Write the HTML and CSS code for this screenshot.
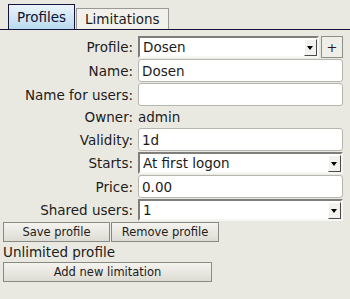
FILE: index.html
```html
<!DOCTYPE html>
<html lang="en">
<head>
    <meta charset="UTF-8">
    <title>Profiles</title>
    <link rel="stylesheet" href="styles.css">
</head>
<body>
    <div class="tabbar">
        <div class="tab active">Profiles</div>
        <div class="tab">Limitations</div>
    </div>

    <div class="form">
        <label>Profile:</label>
        <div class="with-add">
            <div class="select"><span>Dosen</span><span class="arrow"></span></div>
            <button class="add">+</button>
        </div>

        <label>Name:</label>
        <input class="field" type="text" value="Dosen">

        <label>Name for users:</label>
        <input class="field" type="text" value="">

        <label class="plain">Owner:</label>
        <span class="value">admin</span>

        <label>Validity:</label>
        <input class="field" type="text" value="1d">

        <label>Starts:</label>
        <div class="select"><span>At first logon</span><span class="arrow"></span></div>

        <label>Price:</label>
        <input class="field" type="text" value="0.00">

        <label>Shared users:</label>
        <div class="select"><span>1</span><span class="arrow"></span></div>
    </div>

    <div class="actions">
        <button class="btn save">Save profile</button>
        <button class="btn remove">Remove profile</button>
    </div>

    <p class="note">Unlimited profile</p>
    <button class="btn wide">Add new limitation</button>
</body>
</html>
```

FILE: styles.css
```css
:root {
    --bg: #eae9e1;
    --text: #1c1c1c;
    --line: #14143c;
}

* {
    box-sizing: border-box;
    font-family: 'DejaVu Sans', sans-serif;
}

body {
    margin: 0;
    background: var(--bg);
    color: var(--text);
    font-size: 13.5px;
}

/* Tabs */
.tabbar {
    display: flex;
    align-items: flex-end;
    height: 30px;
    padding-left: 8px;
    border-bottom: 1px solid var(--line);
}

.tab {
    height: 21px;
    padding: 0 8px;
    margin-left: 1px;
    font-size: 13.5px;
    line-height: 21px;
    background: #f1f0ea;
    border: 1px solid #9a9a94;
    border-bottom: none;
}

.tab.active {
    height: 25px;
    margin-left: 0;
    line-height: 24px;
    background: linear-gradient(#eaf4fb, #b9daef);
    border-color: var(--line);
    color: #101030;
}

/* Form */
.form {
    display: grid;
    grid-template-columns: 133px 1fr;
    column-gap: 5px;
    row-gap: 1px;
    margin-top: 6px;
    padding-right: 7px;
    align-items: center;
}

.form label {
    text-align: right;
}

.form .plain,
.form .value {
    height: 20px;
    line-height: 20px;
}

.with-add {
    display: flex;
    gap: 2px;
}

.with-add .select {
    flex: 1;
}

.select {
    display: flex;
    align-items: center;
    height: 22px;
    background: #fff;
    border: 2px solid;
    border-color: #7e7e7a #f6f6f2 #f6f6f2 #7e7e7a;
    padding-left: 3px;
}

.select span:first-child {
    flex: 1;
}

.arrow {
    position: relative;
    width: 13px;
    height: 17px;
    background: #f2f2ee;
    border: 1px solid;
    border-color: #ffffff #4a4a4a #4a4a4a #ffffff;
}

.arrow::after {
    content: "";
    position: absolute;
    left: 2px;
    top: 6px;
    border-top: 4px solid #000;
    border-left: 3.5px solid transparent;
    border-right: 3.5px solid transparent;
}

.add {
    width: 22px;
    height: 22px;
    padding: 0;
    font-size: 13px;
    color: #2a1a1a;
    background: #efeee8;
    border: 1px solid #8e8e88;
}

.field {
    height: 23px;
    width: 100%;
    padding: 0 3px;
    font-size: 13.5px;
    color: var(--text);
    background: #fff;
    border: 1px solid #b6b6ae;
    border-radius: 3px;
    outline: none;
}

/* Buttons */
.actions {
    display: flex;
    gap: 1px;
    margin: 1px 0 0 3px;
}

.btn {
    height: 20px;
    padding: 0;
    font-size: 11.5px;
    color: var(--text);
    background: linear-gradient(#f4f3ee, #dddcd4);
    border: 1px solid #8a8a84;
}

.save {
    width: 107px;
}

.remove {
    width: 108px;
}

.note {
    margin: 1px 0 0 3px;
    line-height: 18px;
}

.wide {
    display: block;
    width: 209px;
    margin: 1px 0 0 3px;
}
```
